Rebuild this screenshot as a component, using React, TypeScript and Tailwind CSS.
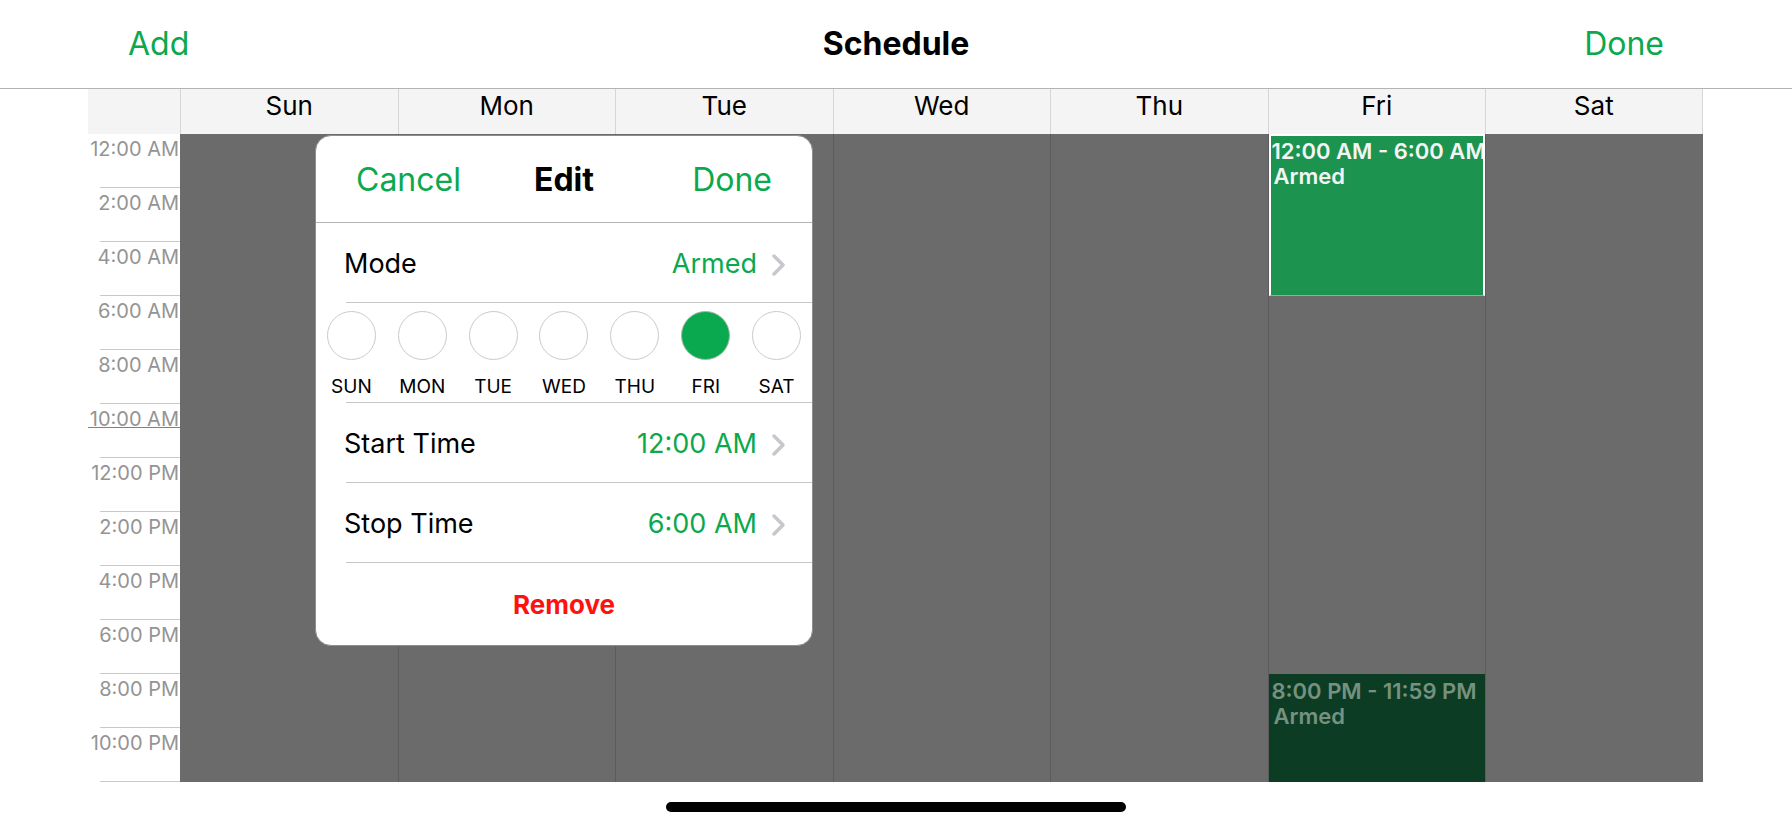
import React from 'react';

const days = ['Sun', 'Mon', 'Tue', 'Wed', 'Thu', 'Fri', 'Sat'];
const hours = [
  '12:00 AM', '2:00 AM', '4:00 AM', '6:00 AM', '8:00 AM', '10:00 AM',
  '12:00 PM', '2:00 PM', '4:00 PM', '6:00 PM', '8:00 PM', '10:00 PM',
];
const picks: [string, boolean][] = [
  ['SUN', false], ['MON', false], ['TUE', false], ['WED', false],
  ['THU', false], ['FRI', true], ['SAT', false],
];

function Chevron() {
  return (
    <svg width="15" height="24" viewBox="0 0 15 24" className="shrink-0">
      <path d="M3 3 L12 12 L3 21" fill="none" stroke="#c7c7cc" strokeWidth="3.5" strokeLinecap="round" strokeLinejoin="round" />
    </svg>
  );
}

function SettingRow({ label, value }: { label: string; value: string }) {
  return (
    <div className="ml-[30px] h-[80px] flex items-center justify-between border-b border-[#c8c8cc] pr-[26px] pt-[4px]">
      <span className="-ml-[2px] text-[27px] text-black">{label}</span>
      <div className="flex items-center gap-[14px]">
        <span className="text-[27px] text-[#0ba84e]">{value}</span>
        <Chevron />
      </div>
    </div>
  );
}

function EditSheet() {
  return (
    <div className="absolute left-[315px] top-[135px] w-[498px] h-[511px] bg-white rounded-[16px] border border-[#8e8e8e] overflow-hidden flex flex-col">
      {/* Header */}
      <div className="h-[87px] shrink-0 grid grid-cols-[1fr_auto_1fr] items-center px-[40px] pt-[2px] border-b border-[#b4b4b4]">
        <span className="text-[32px] text-[#0ba84e]">Cancel</span>
        <span className="text-[32px] font-bold text-black">Edit</span>
        <span className="justify-self-end text-[32px] text-[#0ba84e]">Done</span>
      </div>

      <SettingRow label="Mode" value="Armed" />

      {/* Day picker */}
      <div className="h-[100px] shrink-0 flex flex-col">
        <div className="grid grid-cols-7 flex-1 pt-[8px]">
          {picks.map(([d, on]) => (
            <div key={d} className="flex flex-col items-center">
              {on ? (
                <div className="w-[49px] h-[49px] rounded-full bg-[#0aa84f] border-[1.5px] border-[#9fbba8]" />
              ) : (
                <div className="w-[49px] h-[49px] rounded-full bg-white border-[1.5px] border-[#cacaca]" />
              )}
              <span className="mt-[16px] text-[19px] leading-[22px] text-black">{d}</span>
            </div>
          ))}
        </div>
        <div className="ml-[30px] h-px bg-[#c8c8cc]" />
      </div>

      <SettingRow label="Start Time" value="12:00 AM" />
      <SettingRow label="Stop Time" value="6:00 AM" />

      <div className="flex-1 flex items-center justify-center">
        <span className="text-[26px] font-bold text-[#fe1111]">Remove</span>
      </div>
    </div>
  );
}

export default function App() {
  return (
    <div className="w-[1792px] h-[828px] relative overflow-hidden bg-white font-['Inter','Noto_Sans',sans-serif]">
      {/* Nav bar */}
      <div className="h-[89px] grid grid-cols-[1fr_auto_1fr] items-center px-[128px] border-b border-[#b3b3b3]">
        <span className="text-[32px] text-[#0ba84e]">Add</span>
        <span className="text-[32px] font-bold text-black">Schedule</span>
        <span className="justify-self-end text-[32px] text-[#0ba84e]">Done</span>
      </div>

      <div className="ml-[88px] w-[1614.5px]">
        {/* Week header */}
        <div className="h-[45px] bg-[#f4f4f4] grid grid-cols-[92px_repeat(7,1fr)]">
          <div />
          {days.map((d, i) => (
            <div
              key={d}
              className={
                i === 6
                  ? 'border-l border-r border-[#d6d6d6] flex justify-center pt-[2px] text-[26px] leading-[30px] text-black'
                  : 'border-l border-[#d6d6d6] flex justify-center pt-[2px] text-[26px] leading-[30px] text-black'
              }
            >
              {d}
            </div>
          ))}
        </div>

        {/* Body */}
        <div className="relative flex h-[648px]">
          <div className="w-[92px] shrink-0 flex flex-col">
            {hours.map((h) => (
              <div key={h} className="h-[54px] flex flex-col">
                <div className="h-[53px] flex justify-end pt-[3px] pr-[1px] text-[20px] leading-[24px] text-[#949494] whitespace-nowrap">
                  {h}
                </div>
                <div className="ml-[12px] h-px bg-[#c9c9c9]" />
              </div>
            ))}
          </div>
          {/* current time marker */}
          <div className="absolute left-0 top-[293px] w-[92px] h-px bg-[#e2574f]" />

          <div className="flex-1 grid grid-cols-7 bg-[#6b6b6b]">
            {days.map((d, i) => (
              <div key={d} className={i === 0 ? 'relative' : 'relative border-l border-[#5c5c5c]'}>
                {i === 5 && (
                  <>
                    <div className="absolute left-0 right-0 top-0 h-[162px] bg-[#1c9450] border-2 border-white border-b border-b-[#a3a3a3] pl-[1px] pt-[3px] overflow-hidden">
                      <div className="text-[22px] leading-[25px] font-semibold text-[#f4f4f4] whitespace-nowrap">12:00 AM - 6:00 AM</div>
                      <div className="pl-[2px] text-[22px] leading-[25px] font-semibold text-[#f4f4f4]">Armed</div>
                    </div>
                    <div className="absolute left-0 right-0 top-[540px] bottom-0 bg-[#0c3d24] pl-[3px] pt-[5px] overflow-hidden">
                      <div className="text-[22px] leading-[25px] font-semibold text-[#76917f] whitespace-nowrap">8:00 PM - 11:59 PM</div>
                      <div className="pl-[2px] text-[22px] leading-[25px] font-semibold text-[#76917f]">Armed</div>
                    </div>
                  </>
                )}
              </div>
            ))}
          </div>
        </div>
      </div>

      {/* Home indicator */}
      <div className="flex justify-center pt-[20px]">
        <div className="w-[460px] h-[10px] rounded-full bg-black" />
      </div>

      <EditSheet />
    </div>
  );
}
